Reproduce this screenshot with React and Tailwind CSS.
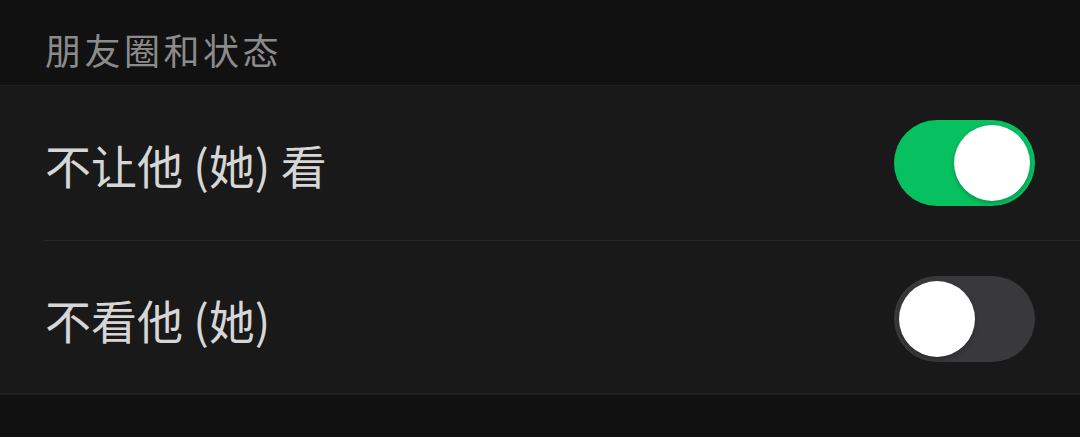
import React, { useState } from "react";

const font = { fontFamily: '"Noto Sans CJK SC", "Noto Sans", sans-serif' };

function Toggle({ on, onClick }) {
  return (
    <button
      onClick={onClick}
      className={`relative w-[141px] h-[86px] rounded-full shrink-0 ${on ? "bg-[#07c160]" : "bg-[#39393c]"}`}
    >
      <span
        className={`absolute top-[5px] w-[76px] h-[76px] rounded-full bg-white shadow-[0_2px_4px_rgba(0,0,0,0.25)] ${on ? "left-[60px]" : "left-[5px]"}`}
      />
    </button>
  );
}

export default function App() {
  const [hide, setHide] = useState(true);
  const [mute, setMute] = useState(false);

  return (
    <div className="w-[1080px] h-[437px] bg-[#111111] overflow-hidden" style={font}>
      <div className="h-[86px] flex items-center pl-[45px] pt-[12px] text-[36px] tracking-[3.5px] text-[#8b8b8b] border-b border-[#1f1f1f]">
        朋友圈和状态
      </div>
      <div className="bg-[#191919]">
        <div className="h-[154px] flex items-center justify-between pl-[45px] pr-[45px]">
          <span className="text-[46px] pt-[2px] text-[#d6d6d6]">不让他 (她) 看</span>
          <Toggle on={hide} onClick={() => setHide(!hide)} />
        </div>
        <div className="ml-[44px] h-px bg-[#262626]" />
        <div className="h-[152px] flex items-center justify-between pl-[45px] pr-[45px] pt-[4px]">
          <span className="text-[46px] text-[#d6d6d6]">不看他 (她)</span>
          <Toggle on={mute} onClick={() => setMute(!mute)} />
        </div>
      </div>
      <div className="h-[2px] bg-[#1f1f1f]" />
    </div>
  );
}
